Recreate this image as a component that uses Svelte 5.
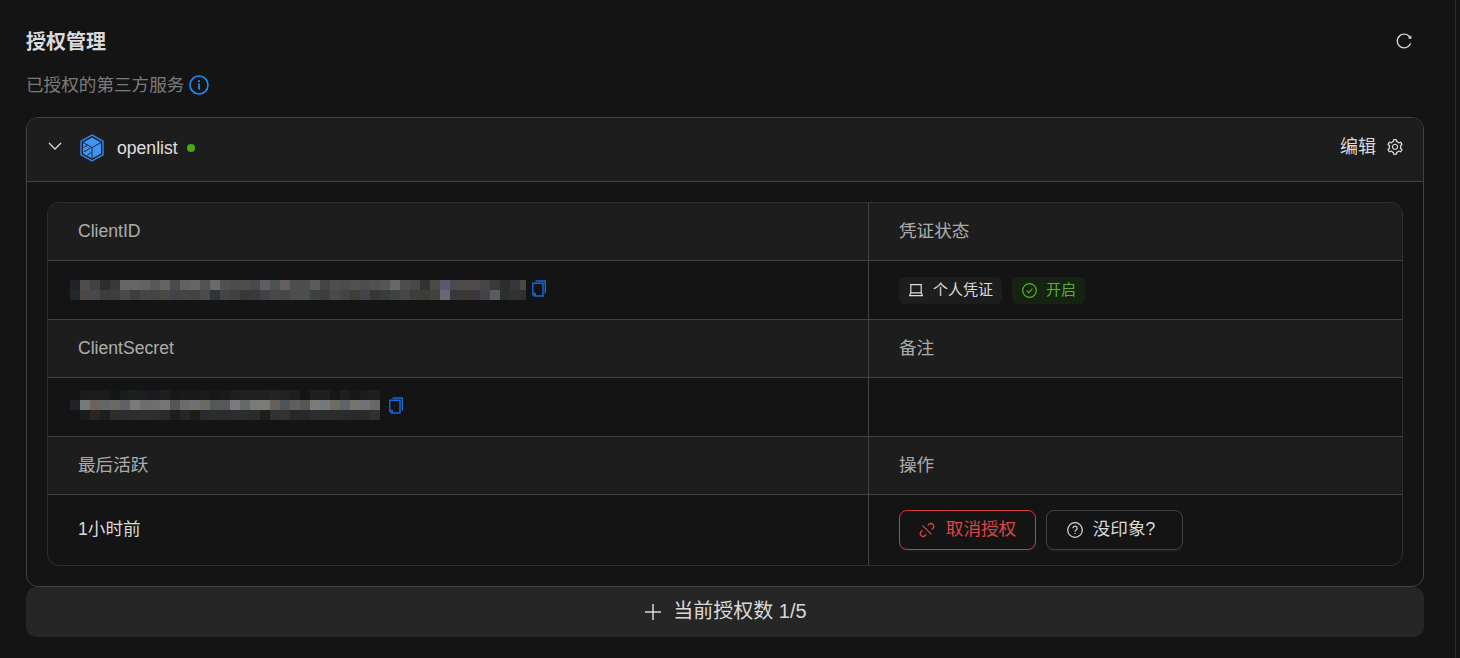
<script>
  // censored values are mosaics in the screenshot: rows of 10px blocks
  const idTop = '1e2126 4d4e50 414243 302c2a 353a3d 666667 656565 63645e 56585a 616660 4a4b4c 656162 666665 505352 68696c 525150 4a4d4b 504d4b 4b4849 5e5d63 4c5152 625f5e 4e4c4c 4d4e4f 5a5e5a 444544 4c4e50 4b4c4e 53504e 4b4e51 4f5152 545652 6a6866 504d50 494845 2f3433 4b4946 5d586f 484c4e 4f4c48 4f4a4e 474647 3a3a3a 2c2e2d 36363f 4a4a48'.split(' ');
  const idBottom = '1f2730 4f4645 46494b 3e3c3a 3c3f3e 484948 3e3e3f 474647 434445 454843 424345 454546 434342 4b4c4a 2e3438 464343 3f413f 3a3836 393a3b 434145 4a4847 464647 4c4d4e 4d4d4e 3d4140 3e3f3d 484a4b 434445 3d3e3c 424447 373833 383c40 3e4241 484545 3e3d3a 3a3d37 414240 6a6678 35383c 3b3836 3a383c 45424a 5b5c5b 2a2f31 343130 302f2d'.split(' ');
  const secretTop = '141414 1a1c1b 1c1c1a 1c1d19 151618 1a1e1e 1b1f1d 1c1d1e 1a1b1e 1d1f1f 171717 1a1a1a 19191a 1a1c1b 171715 1a1a1a 1f1f1f 202020 202020 212121 222426 202122 1e1e1e 151515 1e1e1e 1f1f20 171717 1f1f1f 181818 1d1d1d 1e1e1e'.split(' ');
  const secretMid = '1f2226 747b7a 6d635c 5f6864 696a66 606164 7a7a78 6d6c70 716d6e 767576 565656 6f6a6a 6e7273 696b64 565757 54575c 7a7a7c 646a6a 7a7a79 7a7a79 645f58 4f5557 5f5f5f 575652 7b7a78 737a7d 6c6c62 5e6467 75746f 71717a 696866'.split(' ');
  const secretBottom = '141414 1b1d1d 282523 1b1f1e 2d2d2d 2d2d2d 2e2e2e 2f2e30 2e2e2e 2b2b2b 1e1e1c 25252a 1f1d1a 2a2c2c 2b2d2d 2b2b2b 2d2d2d 2c2c2c 2b2b2b 1d1d1b 2e3235 313232 2a2827 272829 2b2d30 2c2c2a 2c2c2a 2b2b2b 2a2a2a 2a2a2a 303030'.split(' ');
  const idRows = [idTop, idBottom];
  const secretRows = [secretTop, secretMid, secretBottom];
</script>

{#snippet copyIcon()}
  <svg class="copy" viewBox="0 0 14 17" width="14" height="17" fill="none" stroke="#1668dc" stroke-width="1.4">
    <path d="M3.5 1h9.8v12.6" />
    <path d="M11 3.2H.8v11l1.8 1.8H11z" />
    <path d="M.8 13.4h2.4V16" />
  </svg>
{/snippet}

{#snippet mosaic(rows, kind)}
  <div class="mosaic {kind}">
    {#each rows as row}
      <div class="mosaic-row">
        {#each row as c}
          <i style:background="#{c}"></i>
        {/each}
      </div>
    {/each}
  </div>
{/snippet}

<div class="page">
  <div class="panel">
    <div class="title-row">
      <h1>授权管理</h1>
      <button class="reload" aria-label="刷新">
        <svg viewBox="64 64 896 896" width="16" height="16" fill="currentColor"><path d="M909.1 209.3l-56.4 44.1C775.8 155.1 656.2 92 521.9 92 290 92 102.3 279.5 102 511.5 101.7 743.7 289.8 932 521.9 932c181.3 0 335.8-115 394.6-276.1 1.5-4.2-.7-8.9-4.9-10.3l-56.7-19.5a8 8 0 0 0-10.1 4.8c-1.8 5-3.8 10-5.9 14.9-17.3 41-42.1 77.8-73.7 109.4A344.77 344.77 0 0 1 655.9 829c-42.3 17.9-87.4 27-133.8 27-46.5 0-91.5-9.1-133.8-27A341.5 341.5 0 0 1 279 755.2a342.16 342.16 0 0 1-73.7-109.4c-17.9-42.4-27-87.4-27-133.9s9.1-91.5 27-133.9c17.3-41 42.1-77.8 73.7-109.4 31.6-31.6 68.4-56.4 109.3-73.8 42.3-17.9 87.4-27 133.8-27 46.5 0 91.5 9.1 133.8 27a341.5 341.5 0 0 1 109.3 73.8c9.9 9.9 19.2 20.4 27.8 31.4l-60.2 47a8 8 0 0 0 3 14.1l175.6 43c5 1.2 9.9-2.6 9.9-7.7l.8-180.9c-.1-6.6-7.8-10.3-13-6.2z"/></svg>
      </button>
    </div>
    <div class="desc">
      <span class="zh">已授权的第三方服务</span>
      <svg viewBox="0 0 20 20" width="20" height="20" fill="none" stroke="#1890ff">
        <circle cx="10" cy="10" r="9" stroke-width="1.6" />
        <path d="M10 8.6v6" stroke-width="1.8" />
        <path d="M10 5.2v1.8" stroke-width="1.9" />
      </svg>
    </div>

    <div class="collapse">
      <div class="head">
        <svg class="chevron" viewBox="0 0 14 8" width="14" height="8" fill="none" stroke="currentColor" stroke-width="1.3"><path d="M1 1l6 6 6-6" /></svg>
        <svg class="logo" viewBox="0 0 24 28" width="24" height="28">
          <path d="M12 1l11 6.3v13.4L12 27 1 20.7V7.3z" fill="none" stroke="#2f7fe6" stroke-width="1.5" />
          <path d="M12 3.4l9 5.1v11L12 24.6l-9-5.1v-11z" fill="#4193f2" />
          <path d="M3 8.5l9 5.1 9-5.1M12 13.6v11" fill="none" stroke="#14243a" stroke-width="1" />
          <path d="M3.6 13.4l4-2M3.8 18l6.6-4M7.4 21.2l3.4-2.6" fill="none" stroke="#14243a" stroke-width="1" />
        </svg>
        <span class="name">openlist</span>
        <span class="dot"></span>
        <button class="edit">
          <span class="zh">编辑</span>
          <svg viewBox="64 64 896 896" width="16" height="16" fill="currentColor"><path d="M924.8 625.7l-65.5-56c3.1-19 4.7-38.4 4.7-57.8s-1.6-38.8-4.7-57.8l65.5-56a32.03 32.03 0 0 0 9.3-35.2l-.9-2.6a443.74 443.74 0 0 0-79.7-137.9l-1.8-2.1a32.12 32.12 0 0 0-35.1-9.5l-81.3 28.9c-30-24.6-63.5-44-99.7-57.6l-15.7-85a32.05 32.05 0 0 0-25.8-25.7l-2.7-.5c-52.1-9.4-106.9-9.4-159 0l-2.7.5a32.05 32.05 0 0 0-25.8 25.7l-15.8 85.4a351.86 351.86 0 0 0-99 57.4l-81.9-29.1a32 32 0 0 0-35.1 9.5l-1.8 2.1a446.02 446.02 0 0 0-79.7 137.9l-.9 2.6c-4.5 12.5-.8 26.5 9.3 35.2l66.3 56.6c-3.1 18.8-4.6 38-4.6 57.1 0 19.2 1.5 38.4 4.6 57.1L99 625.5a32.03 32.03 0 0 0-9.3 35.2l.9 2.6c18.1 50.4 44.9 96.9 79.7 137.9l1.8 2.1a32.12 32.12 0 0 0 35.1 9.5l81.9-29.1c29.8 24.5 63.1 43.9 99 57.4l15.8 85.4a32.05 32.05 0 0 0 25.8 25.7l2.7.5a449.4 449.4 0 0 0 159 0l2.7-.5a32.05 32.05 0 0 0 25.8-25.7l15.7-85a350 350 0 0 0 99.7-57.6l81.3 28.9a32 32 0 0 0 35.1-9.5l1.8-2.1c34.8-41.1 61.6-87.5 79.7-137.9l.9-2.6c4.5-12.3.8-26.3-9.3-35zM788.3 465.9c2.5 15.1 3.8 30.6 3.8 46.1s-1.3 31-3.8 46.1l-6.6 40.1 74.7 63.9a370.03 370.03 0 0 1-42.6 73.6L721 702.8l-31.4 25.8c-23.9 19.6-50.5 35-79.3 45.8l-38.1 14.3-17.9 97a377.5 377.5 0 0 1-85 0l-17.9-97.2-37.8-14.5c-28.5-10.8-55-26.2-78.7-45.7l-31.4-25.9-93.4 33.2c-17-22.9-31.2-47.6-42.6-73.6l75.5-64.5-6.5-40c-2.4-14.9-3.7-30.3-3.7-45.5 0-15.3 1.2-30.6 3.7-45.5l6.5-40-75.5-64.5c11.3-26.1 25.6-50.7 42.6-73.6l93.4 33.2 31.4-25.9c23.7-19.5 50.2-34.9 78.7-45.7l37.9-14.3 17.9-97.2c28.1-3.2 56.8-3.2 85 0l17.9 97 38.1 14.3c28.7 10.8 55.4 26.2 79.3 45.8l31.4 25.8 92.8-32.9c17 22.9 31.2 47.6 42.6 73.6L781.8 426l6.5 39.9zM512 326c-97.2 0-176 78.8-176 176s78.8 176 176 176 176-78.8 176-176-78.8-176-176-176zm79.2 255.2A111.6 111.6 0 0 1 512 614c-29.9 0-58-11.7-79.2-32.8A111.6 111.6 0 0 1 400 502c0-29.9 11.7-58 32.8-79.2C454 401.6 482.1 390 512 390c29.9 0 58 11.6 79.2 32.8A111.6 111.6 0 0 1 624 502c0 29.9-11.7 58-32.8 79.2z"/></svg>
        </button>
      </div>

      <div class="body">
        <div class="table">
          <div class="cell label">ClientID</div>
          <div class="cell label"><span class="zh">凭证状态</span></div>

          <div class="cell secret">
            {@render mosaic(idRows, 'id')}
            <span class="copy-wrap">{@render copyIcon()}</span>
          </div>
          <div class="cell tags">
            <span class="tag">
              <svg viewBox="0 0 14 14" width="14" height="14" fill="none" stroke="currentColor" stroke-width="1.2"><path d="M1.8 1.6h10.4v8.2H1.8zM1.8 9.8L.6 12.6h12.8l-1.2-2.8" /></svg>
              <span class="zh">个人凭证</span>
            </span>
            <span class="tag on">
              <svg viewBox="0 0 15 15" width="15" height="15" fill="none" stroke="currentColor" stroke-width="1.2"><circle cx="7.5" cy="7.5" r="6.8" /><path d="M4.7 7.7l2 2 3.7-4" /></svg>
              <span class="zh">开启</span>
            </span>
          </div>

          <div class="cell label">ClientSecret</div>
          <div class="cell label"><span class="zh">备注</span></div>

          <div class="cell secret">
            {@render mosaic(secretRows, 'key')}
            <span class="copy-wrap">{@render copyIcon()}</span>
          </div>
          <div class="cell"></div>

          <div class="cell label"><span class="zh">最后活跃</span></div>
          <div class="cell label"><span class="zh">操作</span></div>

          <div class="cell value"><span class="zh">1小时前</span></div>
          <div class="cell actions">
            <button class="btn danger">
              <svg viewBox="0 0 16 16" width="16" height="16" fill="none" stroke="currentColor" stroke-width="1.3">
                <path d="M8.8 3.6l1.5-1.5a2.8 2.8 0 0 1 3.9 3.9l-1.6 1.6" />
                <path d="M7.2 12.4l-1.5 1.5a2.8 2.8 0 0 1-3.9-3.9l1.6-1.6" />
                <path d="M3.6 3.6l8.8 8.8" />
              </svg>
              <span class="zh">取消授权</span>
            </button>
            <button class="btn plain">
              <svg viewBox="0 0 16 16" width="16" height="16" fill="none" stroke="currentColor" stroke-width="1.2">
                <circle cx="8" cy="8" r="7.3" />
                <path d="M5.9 6.3a2.1 2.1 0 1 1 3.2 1.8c-.7.4-1.1.8-1.1 1.6" />
                <path d="M8 10.9v1.2" />
              </svg>
              <span class="zh">没印象?</span>
            </button>
          </div>
        </div>
      </div>
    </div>

    <button class="add">
      <svg viewBox="0 0 16 16" width="16" height="16" fill="none" stroke="currentColor" stroke-width="1.5"><path d="M8 0v16M0 8h16" /></svg>
      <span class="zh">当前授权数 1/5</span>
    </button>
  </div>
</div>

<style>
  :global(body) {
    margin: 0;
    background: #141414;
  }
  .page {
    height: 658px;
    overflow: hidden;
    font-family: "Liberation Sans", "Noto Sans CJK SC", sans-serif;
    font-size: 17.6px;
    color: rgba(255, 255, 255, 0.85);
  }
  /* Noto CJK sits lower on the baseline than the Latin face, lift it back */
  .zh {
    display: block;
    padding-bottom: 4px;
  }
  .value .zh,
  .btn .zh,
  .add .zh {
    padding-bottom: 6px;
  }
  button {
    font: inherit;
    color: inherit;
    background: none;
    border: 0;
    padding: 0;
  }
  .panel {
    box-sizing: border-box;
    width: 1456px;
    height: 700px;
    margin-top: -13px;
    padding: 33px 31px 0 26px;
    border: 1px solid #303030;
    border-left: 0;
    border-radius: 12px;
  }
  .title-row {
    display: flex;
    align-items: center;
    justify-content: space-between;
    height: 40px;
  }
  h1 {
    margin: 0;
    padding-top: 2px;
    font-size: 20px;
    line-height: 38px;
    font-weight: 700;
  }
  .reload {
    display: flex;
    align-items: center;
    justify-content: center;
    width: 40px;
    height: 40px;
    color: #d9d9d9;
  }
  .desc {
    display: flex;
    align-items: center;
    gap: 5px;
    height: 24px;
    margin: 12px 0 20px;
    color: rgba(255, 255, 255, 0.45);
  }
  .collapse {
    border: 1px solid #424242;
    border-radius: 12px;
    overflow: hidden;
  }
  .head {
    display: flex;
    align-items: center;
    box-sizing: border-box;
    height: 64px;
    padding: 0 20px 3px;
    background: #1d1d1d;
    border-bottom: 1px solid #424242;
  }
  .chevron {
    margin: -4px 18px 0 1px;
    color: #d9d9d9;
  }
  .logo {
    margin-right: 13px;
  }
  .name {
    color: #e0e0e0;
  }
  .dot {
    width: 8px;
    height: 8px;
    margin-left: 9px;
    border-radius: 50%;
    background: #49aa19;
  }
  .edit {
    display: flex;
    align-items: center;
    gap: 11px;
    margin: 0 0 3px auto;
    font-size: 18px;
  }
  .edit svg {
    color: #d9d9d9;
  }
  .body {
    padding: 20px;
  }
  .table {
    display: grid;
    grid-template-columns: 821px 1fr;
    grid-template-rows: 58px 59px 58px 59px 58px 70px;
    border: 1px solid #303030;
    border-radius: 12px;
    overflow: hidden;
  }
  .cell {
    display: flex;
    align-items: center;
    box-sizing: border-box;
    padding-left: 30px;
    border-bottom: 1px solid #424242;
  }
  .cell:nth-child(odd) {
    border-right: 1px solid #424242;
  }
  .cell:nth-last-child(-n + 2) {
    border-bottom: 0;
  }
  .label {
    background: #1d1d1d;
    color: rgba(255, 255, 255, 0.65);
  }
  .secret {
    padding-left: 22px;
  }
  .mosaic {
    flex: none;
    overflow: hidden;
  }
  .mosaic.id {
    width: 456px;
  }
  .mosaic.key {
    width: 310px;
    margin-bottom: 4px;
  }
  .mosaic-row {
    display: flex;
    height: 10px;
  }
  .mosaic-row i {
    display: block;
    flex: none;
    width: 10px;
    height: 10px;
  }
  .copy-wrap {
    display: flex;
    margin-bottom: 3px;
  }
  .mosaic.id + .copy-wrap {
    margin-left: 6px;
  }
  .mosaic.key + .copy-wrap {
    margin-left: 9px;
  }
  .tags {
    gap: 10px;
  }
  .tag {
    display: inline-flex;
    align-items: center;
    gap: 10px;
    height: 27px;
    padding: 0 9px 0 10px;
    border-radius: 6px;
    background: #1d1d1d;
    font-size: 15px;
  }
  .tag.on {
    gap: 9px;
    background: #162312;
    color: #52b32a;
  }
  .value {
    color: rgba(255, 255, 255, 0.85);
  }
  .actions {
    gap: 10px;
  }
  .btn {
    display: flex;
    align-items: center;
    justify-content: center;
    gap: 11px;
    box-sizing: border-box;
    width: 137px;
    height: 40px;
    border: 1px solid #424242;
    border-radius: 8px;
    box-shadow: 0 2px 0 rgba(255, 255, 255, 0.04);
  }
  .btn.plain {
    gap: 10px;
    padding-right: 7px;
  }
  .btn.danger {
    border-color: #d9363e;
    color: #dc4446;
    box-shadow: 0 2px 0 rgba(255, 38, 5, 0.06);
  }
  .add {
    display: flex;
    align-items: center;
    justify-content: center;
    gap: 12px;
    width: 100%;
    height: 50px;
    padding: 0 0 0 2px;
    border-radius: 10px;
    background: #262626;
    font-size: 20px;
    color: #d9d9d9;
  }
</style>
